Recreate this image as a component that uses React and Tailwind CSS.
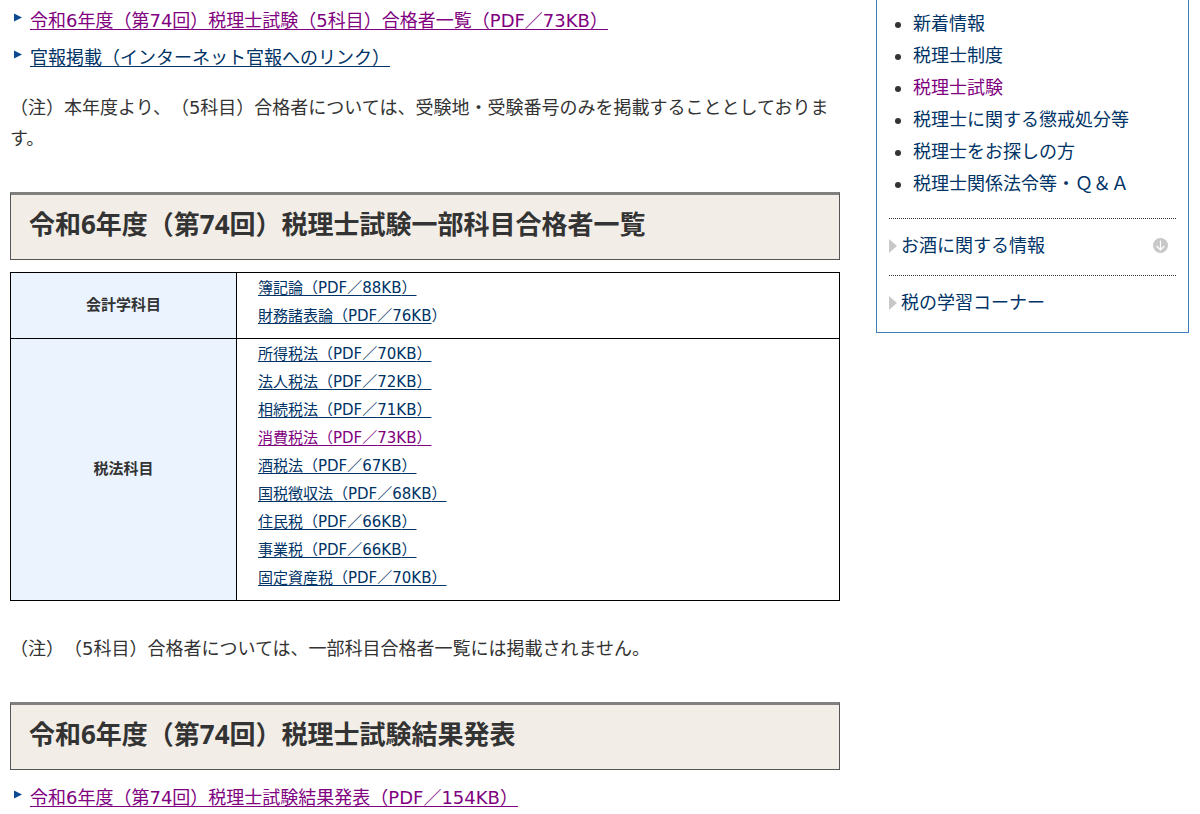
import React from "react";

const accountingSubjects = [
  { name: "簿記論", size: "88KB" },
  { name: "財務諸表論", size: "76KB", openEnd: true },
];

const taxSubjects = [
  { name: "所得税法", size: "70KB" },
  { name: "法人税法", size: "72KB" },
  { name: "相続税法", size: "71KB" },
  { name: "消費税法", size: "73KB", visited: true },
  { name: "酒税法", size: "67KB" },
  { name: "国税徴収法", size: "68KB" },
  { name: "住民税", size: "66KB" },
  { name: "事業税", size: "66KB" },
  { name: "固定資産税", size: "70KB" },
];

const sideLinks = [
  { name: "新着情報" },
  { name: "税理士制度" },
  { name: "税理士試験", visited: true },
  { name: "税理士に関する懲戒処分等" },
  { name: "税理士をお探しの方" },
  { name: "税理士関係法令等・Ｑ＆Ａ" },
];

const linkColor = (visited) => (visited ? "text-[#800080]" : "text-[#003366]");

const ArrowItem = ({ visited, children }) => (
  <li className="flex items-start gap-2 pl-1">
    <svg className="mt-2 h-[9px] w-2 shrink-0" viewBox="0 0 8 9" aria-hidden="true">
      <path d="M0 0.5 L8 4.5 L0 8.5 Z" fill="#0b4a8f" />
    </svg>
    <a href="#" className={`underline decoration-1 underline-offset-2 ${linkColor(visited)}`}>
      {children}
    </a>
  </li>
);

const SectionHeading = ({ children }) => (
  <h2 className="border border-t-[3px] border-[#555] border-t-[#808080] bg-[#f2ede7] pt-[9px] pr-4 pb-[15px] pl-[18px] text-[26px] leading-10 font-bold font-['Noto_Sans','Noto_Sans_CJK_JP',sans-serif]">
    {children}
  </h2>
);

const SubjectRow = ({ title, subjects }) => (
  <tr>
    <th scope="row" className="w-[226px] border border-black bg-[#ebf3ff] text-center font-bold">
      {title}
    </th>
    <td className="border border-black pt-px pb-2 pl-[21px]">
      <ul>
        {subjects.map(({ name, size, visited, openEnd }) => (
          <li key={name} className={`leading-7 ${linkColor(visited)}`}>
            <a href="#" className="underline decoration-1 underline-offset-2">
              {name}（PDF／{size}
              {!openEnd && "）"}
            </a>
            {openEnd && "）"}
          </li>
        ))}
      </ul>
    </td>
  </tr>
);

const SideCategory = ({ children, expandable }) => (
  <div className="flex items-center border-t border-dotted border-[#333] pt-[11px] pb-[14px]">
    <svg className="mr-1 h-[14px] w-2 shrink-0" viewBox="0 0 8 14" aria-hidden="true">
      <path d="M0 0 L8 7 L0 14 Z" fill="#c8c8c8" />
    </svg>
    <a href="#" className="flex-1 text-[#003366]">
      {children}
    </a>
    {expandable && (
      <button type="button" aria-label="開く" className="mr-2">
        <svg className="h-[15px] w-[15px]" viewBox="0 0 15 15" fill="none" aria-hidden="true">
          <circle cx="7.5" cy="7.5" r="7.5" fill="#c8c8c8" />
          <path d="M7.5 2.5 V12 M3.5 8 L7.5 12 L11.5 8" stroke="#fff" strokeWidth="1.2" />
        </svg>
      </button>
    )}
  </div>
);

const App = () => {
  return (
    <div className="flex items-start gap-9 bg-white pr-[11px] pl-[10px] text-lg leading-[31px] text-[#333] font-['DejaVu_Sans','Noto_Sans_CJK_JP',sans-serif] [text-spacing-trim:space-all]">
      <main className="min-w-0 flex-1 pt-[5px]">
        <ul className="space-y-[6px]">
          <ArrowItem visited>令和6年度（第74回）税理士試験（5科目）合格者一覧（PDF／73KB）</ArrowItem>
          <ArrowItem>官報掲載（インターネット官報へのリンク）</ArrowItem>
        </ul>
        <p className="mt-[19px] mb-[38px]">
          （注）本年度より、（5科目）合格者については、受験地・受験番号のみを掲載することとしております。
        </p>

        <SectionHeading>令和6年度（第74回）税理士試験一部科目合格者一覧</SectionHeading>
        <table className="mt-3 w-full border-collapse text-[15px]">
          <tbody>
            <SubjectRow title="会計学科目" subjects={accountingSubjects} />
            <SubjectRow title="税法科目" subjects={taxSubjects} />
          </tbody>
        </table>
        <p className="mt-8 mb-[38px]">
          （注）（5科目）合格者については、一部科目合格者一覧には掲載されません。
        </p>

        <SectionHeading>令和6年度（第74回）税理士試験結果発表</SectionHeading>
        <ul className="mt-3">
          <ArrowItem visited>令和6年度（第74回）税理士試験結果発表（PDF／154KB）</ArrowItem>
        </ul>
      </main>

      <aside className="w-[313px] shrink-0 border border-t-0 border-[#3f7fbf] px-3 pt-2">
        <ul className="mb-[18px] list-disc pl-6">
          {sideLinks.map(({ name, visited }) => (
            <li key={name} className="leading-8">
              <a href="#" className={linkColor(visited)}>
                {name}
              </a>
            </li>
          ))}
        </ul>
        <SideCategory expandable>お酒に関する情報</SideCategory>
        <SideCategory>税の学習コーナー</SideCategory>
      </aside>
    </div>
  );
};

export default App;
